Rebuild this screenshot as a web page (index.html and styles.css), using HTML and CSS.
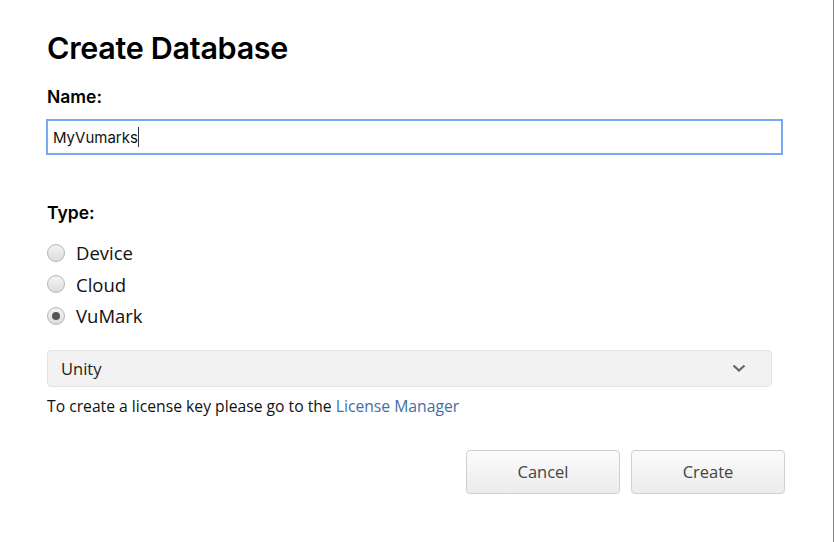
FILE: index.html
```html
<!DOCTYPE html>
<html>
<head>
<meta charset="utf-8">
<link rel="stylesheet" href="styles.css">
</head>
<body>
<div class="page">
  <h1 class="title">Create Database</h1>
  <label class="label name-label">Name:</label>
  <div class="input"><span>MyVumarks</span><span class="caret"></span></div>
  <label class="label type-label">Type:</label>
  <div class="radios">
    <div class="radio"><span class="dot"></span><span>Device</span></div>
    <div class="radio"><span class="dot"></span><span>Cloud</span></div>
    <div class="radio"><span class="dot checked"></span><span>VuMark</span></div>
  </div>
  <div class="select">
    <span>Unity</span>
    <svg class="chev" width="14" height="9" viewBox="0 0 14 9"><path d="M1.5 1.5 L7 6.5 L12.5 1.5" fill="none" stroke="#666" stroke-width="2.2"/></svg>
  </div>
  <p class="help">To create a license key please go to the <a class="link">License Manager</a></p>
  <div class="actions">
    <button class="btn">Cancel</button>
    <button class="btn">Create</button>
  </div>
</div>
</body>
</html>
```
FILE: styles.css
```css
html, body { margin: 0; padding: 0; background: #fff; }
body { width: 834px; height: 542px; overflow: hidden; }
.page {
  box-sizing: border-box;
  width: 834px;
  height: 542px;
  border-right: 1px solid #8a8a8a;
  padding: 28px 0 0 47px;
  font-family: "Open Sans", "Liberation Sans", sans-serif;
  color: #111;
}
.title {
  margin: 0;
  font-family: Inter, "Liberation Sans", sans-serif;
  font-weight: 600;
  font-size: 30.5px;
  letter-spacing: -0.3px;
  line-height: 40px;
  color: #000;
}
.label {
  display: block;
  font-family: Inter, "Liberation Sans", sans-serif;
  font-weight: 600;
  font-size: 17.5px;
  line-height: 20px;
  color: #000;
}
.name-label { margin-top: 19px; }
.input {
  box-sizing: border-box;
  margin: 12px 0 0 -1px;
  width: 737px;
  height: 36px;
  border: 2px solid #7aa7f2;
  display: flex;
  align-items: center;
  padding-left: 5px;
  font-family: Inter, "Liberation Sans", sans-serif;
  font-size: 15px;
  color: #111;
}
.caret { width: 1px; height: 20px; background: #333; }
.type-label { margin-top: 48px; }
.radios { margin-top: 20px; display: flex; flex-direction: column; gap: 12px; }
.radio { display: flex; align-items: center; gap: 11px; font-size: 18.5px; line-height: 19.5px; color: #111; }
.dot {
  box-sizing: border-box;
  width: 18px; height: 18px;
  border-radius: 50%;
  border: 1px solid #b5b5b5;
  background: linear-gradient(#f4f4f4, #dcdcdc);
  display: flex; align-items: center; justify-content: center;
}
.dot.checked::after {
  content: "";
  width: 8px; height: 8px; border-radius: 50%; background: #555;
}
.select {
  box-sizing: border-box;
  margin-top: 24px;
  width: 725px;
  height: 37px;
  background: #f2f2f2;
  border: 1px solid #e3e3e3;
  border-radius: 4px;
  display: flex;
  align-items: center;
  justify-content: space-between;
  padding: 0 25px 0 13px;
  font-size: 16.5px;
  color: #222;
}
.help { margin: 8px 0 0; font-size: 15.7px; line-height: 22px; color: #111; }
.link { color: #3f6fa5; }
.actions { display: flex; justify-content: flex-end; gap: 11px; width: 738px; margin-top: 33px; }
.btn {
  width: 154px; height: 44px;
  border: 1px solid #cfcfcf;
  border-radius: 4px;
  background: linear-gradient(#fbfbfb, #ececec);
  font-family: "Open Sans", "Liberation Sans", sans-serif;
  font-size: 16.5px;
  color: #444;
}
```
